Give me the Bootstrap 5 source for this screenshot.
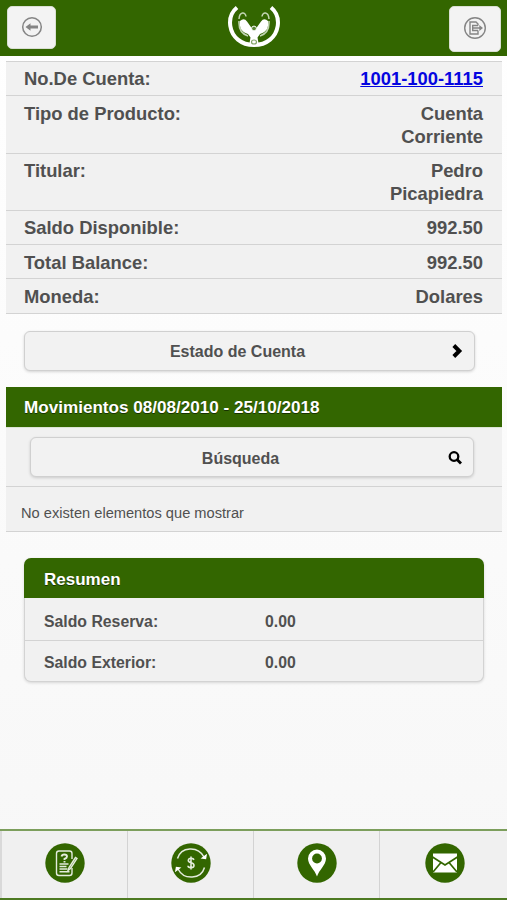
<!DOCTYPE html>
<html lang="es">
<head>
<meta charset="utf-8">
<meta name="viewport" content="width=device-width, initial-scale=1">
<title>Detalle de cuenta</title>
<link href="https://cdn.jsdelivr.net/npm/bootstrap@5.3.0/dist/css/bootstrap.min.css" rel="stylesheet">
<style>
:root { --bank: #336600; --panel: #f1f1f1; --rule: #d3d3d3; --ink: #505050; }
body { font-family: "Liberation Sans", Arial, sans-serif; color: var(--ink); background: linear-gradient(#fff, #f7f7f7); height: 900px; overflow: hidden; }
svg { display: block; }
.topbar { background: var(--bank); height: 56px; padding: 6px 6px 0 7px; }
.btn-top { width: 49px; height: 43px; padding: 0 0 2px; background: #f3f3f3; border: 1px solid #d9dfd3; border-radius: 5px; color: #858585; }
.btn-exit { width: 52px; height: 46px; }
.logo { margin: -2px 0 0 2px; }
.sheet { margin: 5px 5px 0 6px; }
.detail-list { background: var(--panel); border-top: 1px solid var(--rule); font-size: 18.4px; line-height: 23px; font-weight: 700; }
.detail-item { padding: 5.4px 19px 4.9px 18px; border-bottom: 1px solid var(--rule); }
.detail-item a { color: #0505e0; text-underline-offset: 1px; }
.detail-value { max-width: 130px; }
.btn-wide { height: 40px; background: #f2f2f2; border: 1px solid #d0d0d0; border-radius: 6px; box-shadow: 0 1px 3px rgba(0,0,0,.16); color: var(--ink); font-size: 16px; font-weight: 700; padding: 1px 10px 0; }
.btn-statement { margin: 17px 27px 0 18px; width: 451px; }
.btn-caption { padding: 2px 10px 0 0; }
.btn-search .btn-caption { padding: 4px 8px 0 0; }
.section-bar { background: var(--bank); color: #fff; height: 40px; margin-top: 16px; padding: 4px 18px 0; font-size: 17.1px; font-weight: 700; text-shadow: 0 1px 0 #173300; }
.search-area { background: var(--panel); height: 60px; padding: 9px 0 0 24px; border-top: 1px solid #dce5d4; border-bottom: 1px solid var(--rule); }
.btn-search { width: 444px; }
.empty-note { background: var(--panel); height: 45px; padding: 11px 15px 0; font-size: 14.65px; border-bottom: 1px solid var(--rule); }
.summary { margin: 26px 18px 0 18px; border-radius: 7px; border: 1px solid var(--rule); border-top: 0; background: var(--panel); box-shadow: 0 1px 3px rgba(0,0,0,.14); width: 460px; height: 124px; font-size: 15.8px; font-weight: 700; }
.summary-head { height: 40px; margin: 0 -1px; background: var(--bank); color: #fff; border-radius: 7px 7px 0 0; padding: 4px 20px 0; font-size: 17px; text-shadow: 0 1px 0 #173300; }
.summary-line { height: 42px; padding: 6px 19px 0; }
.summary-line + .summary-line { height: 41px; padding-top: 4px; border-top: 1px solid var(--rule); }
.summary-label { width: 221px; }
.tabbar { height: 71px; background: #f0f0f0; border-top: 2px solid #7c9e5c; border-bottom: 2px solid #4d7a22; }
.tab-cell { padding: 12px 0 0; width: 126px; border-right: 1px solid #d3d3d3; }
.tab-cell:first-child { width: 128px; border-left: 2px solid #d9d9d9; }
.tab-cell:last-child { width: 127px; border-right: 0; padding-left: 3px; }
</style>
<script src="https://cdn.jsdelivr.net/npm/bootstrap@5.3.0/dist/js/bootstrap.bundle.min.js"></script>
</head>
<body class="d-flex flex-column">
<header class="topbar d-flex justify-content-between align-items-start">
  <button class="btn btn-top d-flex align-items-center justify-content-center" aria-label="Volver">
    <svg width="22" height="22" viewBox="0 0 22 22" fill="none" stroke="currentColor" stroke-width="1.5"><circle cx="11" cy="11" r="9.3"/><path d="M4.500 11l5-3.800v2.200H17v3.200H9.500v2.200z" fill="currentColor" stroke="none"/></svg>
  </button>
  <svg class="logo" width="54" height="46" viewBox="0 0 54 46">
    <path d="M10 3.500C4.500 8 2.300 15 3.300 22C5 33 14 41 27 41S49 33 50.700 22C51.700 15 49.500 8 44 3.500" fill="none" stroke="#fff" stroke-width="4"/>
    <path d="M12 15C12.500 7.500 18.500 7.500 19 12.500M42 15C41.500 7.500 35.500 7.500 35 12.500M12 17C11.500 25 15 30 21 32M42 17C42.500 25 39 30 33 32" fill="none" stroke="#c3d5b3" stroke-width="1.500"/>
    <path d="M13 17Q17 13.500 20 17.500L25 24.500H29L34 17.500Q37 13.500 41 17C42 24 39 28.500 33 30L30.500 33.500L32 42H22L23.500 33.500L21 30C15 28.500 12 24 13 17Z" fill="#fff"/>
    <circle cx="27" cy="24.500" r="2.400" fill="#5c8636" stroke="#fff"/>
    <ellipse cx="27" cy="38" rx="2.500" ry="2" fill="none" stroke="#86a66a" stroke-width="1.200"/>
  </svg>
  <button class="btn btn-top btn-exit d-flex align-items-center justify-content-center" aria-label="Salir">
    <svg width="24" height="24" viewBox="0 0 24 24" fill="none" stroke="currentColor" stroke-width="1.400"><circle cx="12" cy="12" r="10.300"/><path d="M15 9.500V8L13 6H7V18H15V14.500M9 9.500h6M9 14.500h6M9.700 9.500v5M10 12H17"/><path d="M16.300 9l3.700 3-3.700 3z" fill="currentColor" stroke="none"/></svg>
  </button>
</header>

<main class="sheet flex-grow-1">
  <div class="detail-list">
    <div class="detail-item d-flex justify-content-between"><span>No.De Cuenta:</span><a href="#">1001-100-1115</a></div>
    <div class="detail-item d-flex justify-content-between"><span>Tipo de Producto:</span><span class="detail-value text-end">Cuenta<br>Corriente</span></div>
    <div class="detail-item d-flex justify-content-between"><span>Titular:</span><span class="detail-value text-end">Pedro<br>Picapiedra</span></div>
    <div class="detail-item d-flex justify-content-between"><span>Saldo Disponible:</span><span>992.50</span></div>
    <div class="detail-item d-flex justify-content-between"><span>Total Balance:</span><span>992.50</span></div>
    <div class="detail-item d-flex justify-content-between"><span>Moneda:</span><span>Dolares</span></div>
  </div>

  <button class="btn btn-wide btn-statement d-flex align-items-center">
    <span class="btn-caption flex-grow-1 text-center">Estado de Cuenta</span>
    <svg width="14" height="16" viewBox="0 0 14 16" fill="none" stroke="#000" stroke-width="4"><path d="M3.800 2.500L9.300 8l-5.500 5.500"/></svg>
  </button>

  <h2 class="section-bar d-flex align-items-center mb-0">Movimientos 08/08/2010 - 25/10/2018</h2>
  <div class="search-area">
    <button class="btn btn-wide btn-search d-flex align-items-center">
      <span class="btn-caption flex-grow-1 text-center">Búsqueda</span>
      <svg width="15" height="15" viewBox="0 0 15 15" fill="none" stroke="#000"><circle cx="6" cy="6.500" r="4.300" stroke-width="2.300"/><path d="M9 9.500l4 4" stroke-width="2.800"/></svg>
    </button>
  </div>
  <div class="empty-note d-flex align-items-center">No existen elementos que mostrar</div>

  <section class="summary">
    <div class="summary-head d-flex align-items-center">Resumen</div>
    <div class="summary-line d-flex align-items-center"><span class="summary-label">Saldo Reserva:</span><span>0.00</span></div>
    <div class="summary-line d-flex align-items-center"><span class="summary-label">Saldo Exterior:</span><span>0.00</span></div>
  </section>
</main>

<nav class="tabbar d-flex">
  <a href="#" class="tab-cell d-flex justify-content-center" aria-label="Solicitudes">
    <svg width="40" height="40" viewBox="0 0 40 40" fill="none" stroke="#e4ecdd" stroke-width="1.400"><circle cx="20" cy="20" r="19.700" fill="#336600" stroke="none"/><path d="M27 16V10.500Q27 8 24.500 8H14Q11.500 8 11.500 10.500V30Q11.500 32.500 14 32.500H24.500Q27 32.500 27 30V25"/><path d="M16.500 13.500Q17 11.500 19.300 11.500Q22 11.500 22 13.500Q22 15 19.500 16V17M19.500 18v1.500" stroke-width="1.900"/><path d="M14.500 21h9M14.500 23.500h7M14.500 26h8M14.500 28.800h10"/><path d="M30.500 14.500L24 24.500l-1 3 2.500-2L32 15.500z"/></svg>
  </a>
  <a href="#" class="tab-cell d-flex justify-content-center" aria-label="Transferencias">
    <svg width="40" height="40" viewBox="0 0 40 40" fill="none" stroke="#e4ecdd" stroke-width="1.500"><circle cx="20" cy="20" r="19.700" fill="#336600" stroke="none"/><path d="M6.500 15.500C10 3.500 27 2.500 33 14M33.500 24.500C30 36.500 13 37.500 7 26"/><path d="M31.500 15l3 .500.500-3zM8.500 25l-3-.500-.500 3z" fill="#fff" stroke="#fff"/><path d="M22.800 17Q22.500 15.300 20 15.300T17.300 17.500C17.300 20.500 23 19 23 22.300Q23 24.700 20 24.700T17 22.800M20 13.500v13" stroke-width="1.600"/></svg>
  </a>
  <a href="#" class="tab-cell d-flex justify-content-center" aria-label="Ubicaciones">
    <svg width="40" height="40" viewBox="0 0 40 40"><circle cx="20" cy="20" r="19.700" fill="#336600"/><path d="M20 33.500C18 27 11 22 11 15.500A9 9 0 0 1 29 15.500C29 22 22 27 20 33.500Z" fill="#fff"/><circle cx="20" cy="15.500" r="4.900" fill="#336600"/></svg>
  </a>
  <a href="#" class="tab-cell d-flex justify-content-center" aria-label="Mensajes">
    <svg width="40" height="40" viewBox="0 0 40 40"><circle cx="20" cy="20" r="19.700" fill="#336600"/><path d="M8 10.500H32V29.500H8Z" fill="#fff"/><path d="M7.500 14L20 22L32.500 14M8 29L16 19.500M32 29L24 19.500" fill="none" stroke="#336600" stroke-width="1.700"/></svg>
  </a>
</nav>
</body>
</html>
